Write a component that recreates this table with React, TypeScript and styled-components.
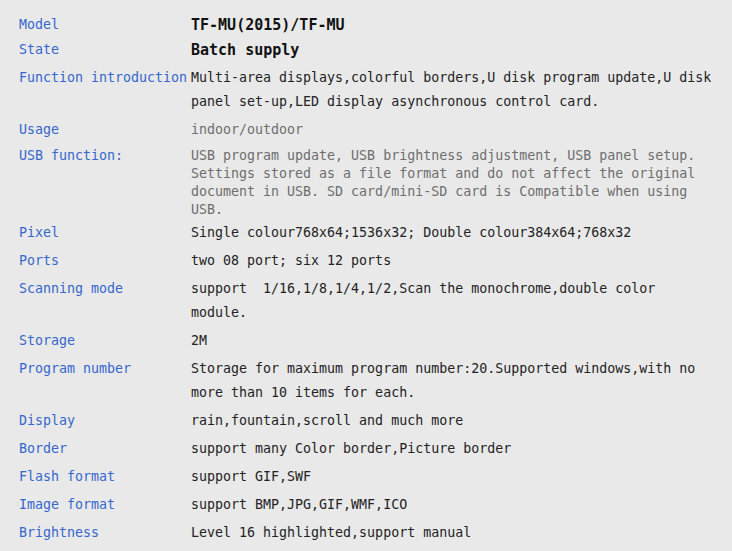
import React from 'react';
import styled, { createGlobalStyle } from 'styled-components';

type Tone = 'strong' | 'dark' | 'muted';

interface SpecRow {
    label: string;
    value: string;
    tone?: Tone;
    pad?: string;
    lh?: number;
}

const rows: SpecRow[] = [
    { label: 'Model', value: 'TF-MU(2015)/TF-MU', tone: 'strong', pad: '1px 0 0' },
    { label: 'State', value: 'Batch supply', tone: 'strong', pad: '1px 0 2px' },
    {
        label: 'Function introduction',
        value: 'Multi-area displays,colorful borders,U disk program update,U disk panel set-up,LED display asynchronous control card.',
    },
    { label: 'Usage', value: 'indoor/outdoor', tone: 'muted' },
    {
        label: 'USB function:',
        value: 'USB program update, USB brightness adjustment, USB panel setup. Settings stored as a file format and do not affect the original document in USB. SD card/mini-SD card is Compatible when using USB.',
        tone: 'muted',
        pad: '3px 0 0',
        lh: 18,
    },
    { label: 'Pixel', value: 'Single colour768x64;1536x32; Double colour384x64;768x32' },
    { label: 'Ports', value: 'two 08 port; six 12 ports' },
    {
        label: 'Scanning mode',
        value: 'support\u00a0 1/16,1/8,1/4,1/2,Scan the monochrome,double color module.',
    },
    { label: 'Storage', value: '2M' },
    {
        label: 'Program number',
        value: 'Storage for maximum program number:20.Supported windows,with no more than 10 items for each.',
    },
    { label: 'Display', value: 'rain,fountain,scroll and much more' },
    { label: 'Border', value: 'support many Color border,Picture border' },
    { label: 'Flash format', value: 'support GIF,SWF' },
    { label: 'Image format', value: 'support BMP,JPG,GIF,WMF,ICO' },
    { label: 'Brightness', value: 'Level 16 highlighted,support manual' },
];

export default function App() {
    return (
        <>
            <GlobalStyle />
            <Sheet>
                {rows.map((row) => (
                    <Row key={row.label} $pad={row.pad ?? '2px 0'} $lh={row.lh ?? 24}>
                        <Label>{row.label}</Label>
                        <Value $tone={row.tone ?? 'dark'}>{row.value}</Value>
                    </Row>
                ))}
            </Sheet>
        </>
    );
}

const GlobalStyle = createGlobalStyle`
    html, body {
        margin: 0;
        background: #e9e9e9;
    }
`;

const Sheet = styled.div`
    padding: 12px 0 0 19px;
    font-family: 'DejaVu Sans Mono', 'Liberation Mono', monospace;
    font-size: 13.3px;
`;

const Row = styled.div<{ $pad: string; $lh: number }>`
    display: grid;
    grid-template-columns: 172px 524px;
    padding: ${({ $pad }) => $pad};
    line-height: ${({ $lh }) => $lh}px;
`;

const Label = styled.div`
    color: #3567cc;
    white-space: nowrap;
`;

const Value = styled.div<{ $tone: Tone }>`
    color: ${({ $tone }) => {
        if ($tone === 'strong') return '#111';
        if ($tone === 'muted') return '#6e6e6e';
        return '#232323';
    }};
    font-size: ${({ $tone }) => ($tone === 'strong' ? '15px' : 'inherit')};
    font-weight: ${({ $tone }) => ($tone === 'strong' ? 'bold' : 'normal')};
`;
